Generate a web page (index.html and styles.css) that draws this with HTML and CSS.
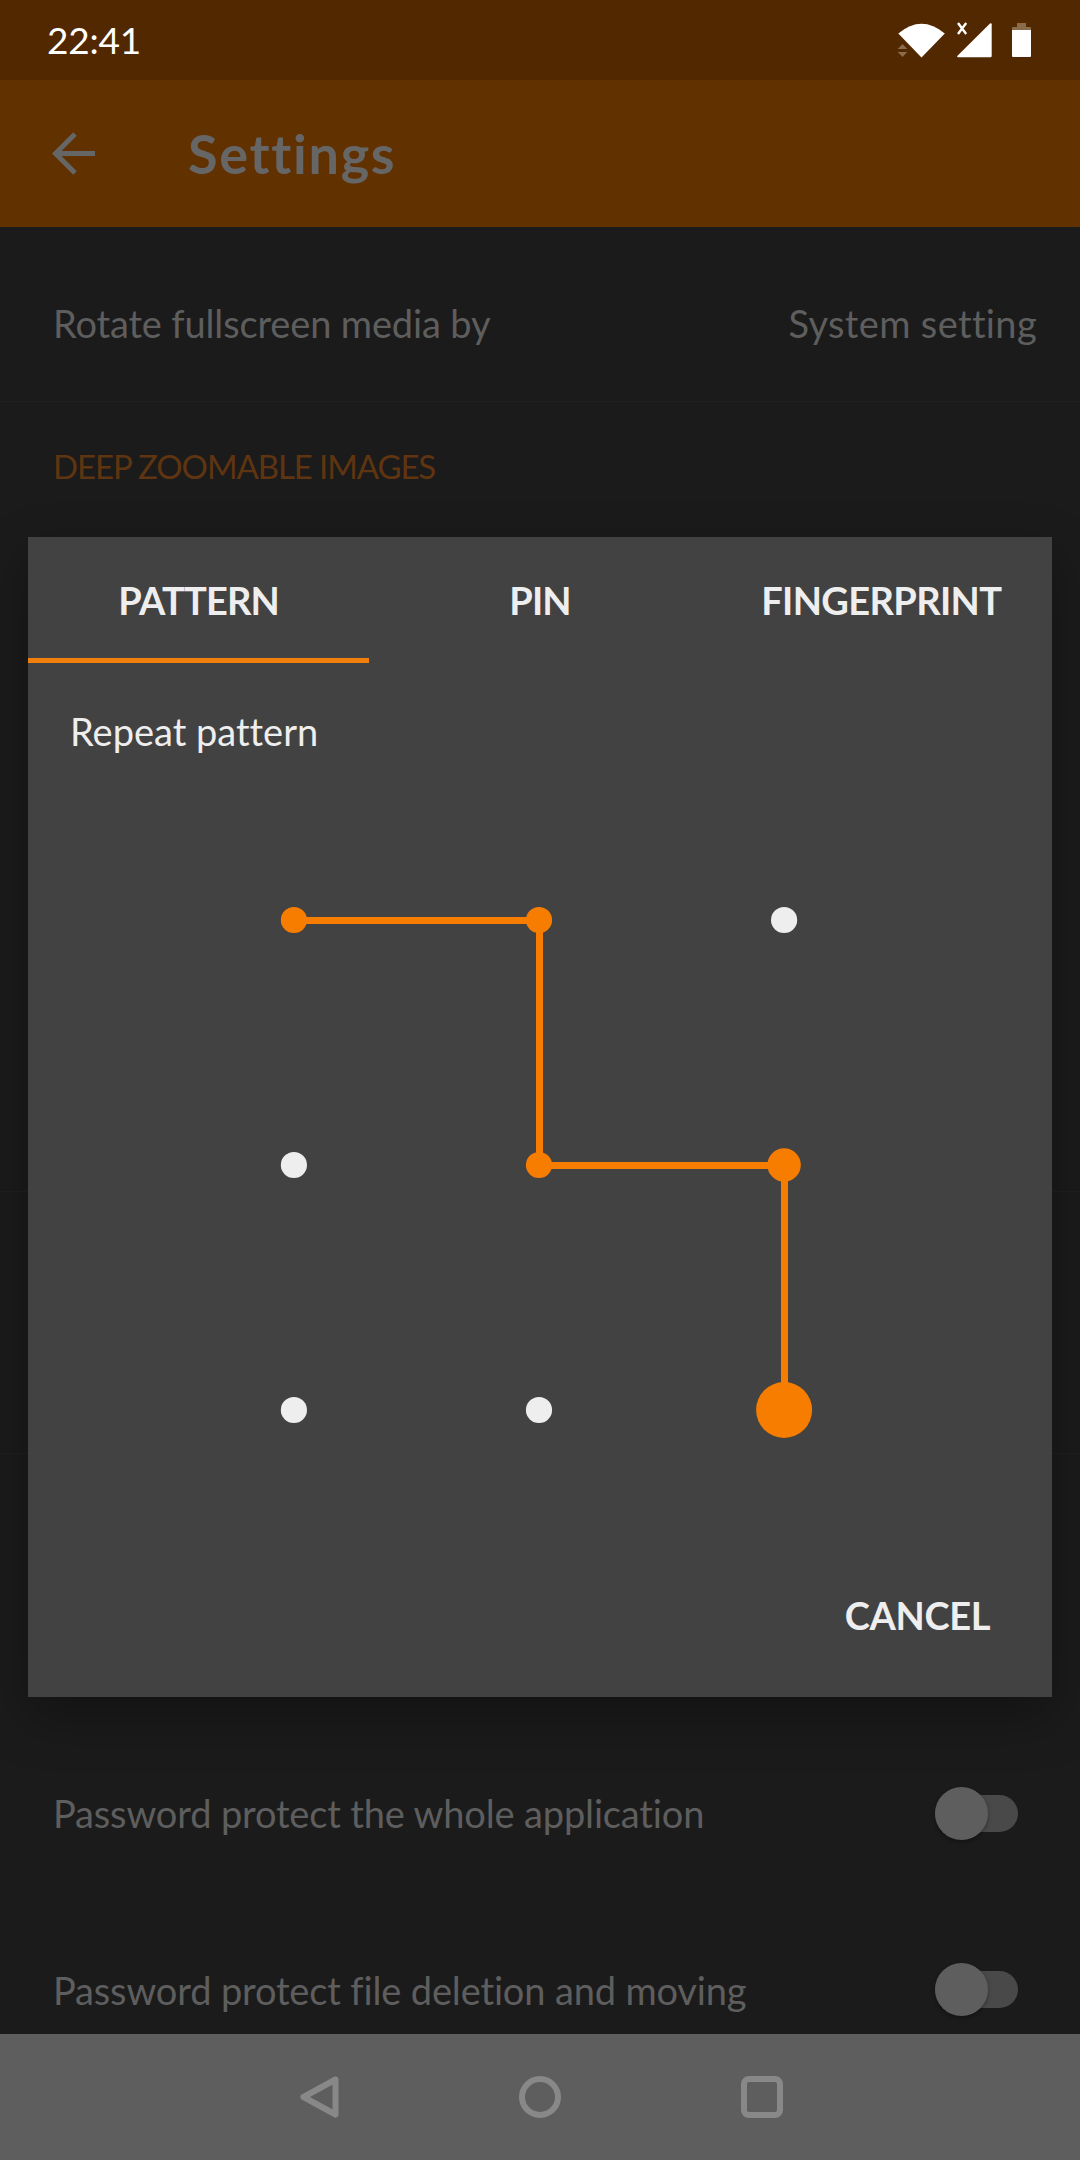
FILE: index.html
```html
<!DOCTYPE html>
<html lang="en">
<head>
<meta charset="utf-8">
<title>Settings</title>
<link rel="stylesheet" href="styles.css">
</head>
<body>
<div class="screen">
  <div class="status-bar">
    <span class="clock">22:41</span>
    <svg class="status-icons" width="140" height="40" viewBox="895 20 140 40">
      <path d="M898.3 33.5Q921.5 14 944.8 33.5L921.5 57.5Z" fill="#fff"/>
      <path d="M902.5 44l4.800 5h-9.600zM902.500 57l4.800-5h-9.600z" fill="#8a6b4c"/>
      <path d="M958 57.300q-1.800-.3-.5-1.600L990 23.400q1.700-.8 1.700 1V56q0 1.300-1.300 1.300z" fill="#fff"/>
      <path d="M958 23l8.200 11M966.200 23L958 34" stroke="#fff" stroke-width="2.400"/>
      <path d="M1012 30v-2q0-1 1-1h4v-4h9v4h4q1 0 1 1v2z" fill="#8a6b4c"/>
      <path d="M1012 30h19v26q0 1-1 1h-17q-1 0-1-1z" fill="#fff"/>
    </svg>
  </div>
  <header class="app-bar">
    <svg class="back" width="44" height="44" viewBox="0 0 44 44"><path d="M23 2L3.500 21.500 23 41M4 21.500h39" fill="none" stroke="#666" stroke-width="5"/></svg>
    <h1 class="title">Settings</h1>
  </header>
  <main class="settings">
    <div class="row row-first"><span class="label">Rotate fullscreen media by</span><span class="value">System setting</span></div>
    <div class="section">DEEP ZOOMABLE IMAGES</div>
    <div class="group group-a"></div>
    <div class="group group-b"></div>
    <div class="group group-c"></div>
    <div class="row"><span class="label">Password protect the whole application</span><span class="switch"><span class="thumb"></span></span></div>
    <div class="row row-last"><span class="label">Password protect file deletion and moving</span><span class="switch"><span class="thumb"></span></span></div>
  </main>
  <nav class="nav-bar">
    <svg width="44" height="44" viewBox="0 0 44 44"><path d="M39.500 4.500L7.500 22 39.500 39.500Z"/></svg>
    <svg width="44" height="44" viewBox="0 0 44 44"><circle cx="22" cy="22" r="18"/></svg>
    <svg width="44" height="44" viewBox="0 0 44 44"><rect x="4" y="4" width="36" height="36" rx="5"/></svg>
  </nav>
  <section class="dialog">
    <div class="tabs">
      <div class="tab active">PATTERN</div>
      <div class="tab">PIN</div>
      <div class="tab tab-finger">FINGERPRINT</div>
    </div>
    <p class="prompt">Repeat pattern</p>
    <svg class="lock" width="1024" height="740" viewBox="28 800 1024 740">
      <path d="M294 920.500H539.500V1165.500H784.500V1410" fill="none" stroke="#f77d00" stroke-width="7"/>
      <g fill="#f77d00">
        <circle cx="293.900" cy="920" r="13.100"/><circle cx="539" cy="920" r="13.100"/>
        <circle cx="539" cy="1165" r="13.100"/><circle cx="784.100" cy="1165" r="16.700"/>
        <circle cx="784.100" cy="1410" r="28"/>
      </g>
      <g fill="#eee">
        <circle cx="784.100" cy="920" r="13.100"/><circle cx="293.900" cy="1165" r="13.100"/>
        <circle cx="293.900" cy="1410" r="13.100"/><circle cx="539" cy="1410" r="13.100"/>
      </g>
    </svg>
    <div class="actions">CANCEL</div>
  </section>
</div>
</body>
</html>
```
FILE: styles.css
```css
* { box-sizing: border-box; }
body { margin: 0; background: #1b1b1b; font-family: Lato, "Noto Sans", sans-serif; font-size: 38px; line-height: 56px; white-space: nowrap; font-variant-ligatures: none; }
.screen { position: relative; width: 1080px; height: 2160px; overflow: hidden; display: flex; flex-direction: column; }
.status-bar { height: 80px; background: #522800; display: flex; align-items: center; justify-content: space-between; padding: 0 45px 0 47px; color: #fff; }
.clock { font-size: 37px; letter-spacing: -.2px; }
.app-bar { height: 147px; background: #613100; display: flex; align-items: center; padding-left: 52px; color: #666; }
.title { margin: 0 0 0 92px; font-size: 54px; font-weight: 700; line-height: 80px; letter-spacing: 1.7px; }
.settings { flex: 1; min-height: 0; display: flex; flex-direction: column; color: #5e5e5e; }
.label { letter-spacing: -.15px; }
.value { letter-spacing: .35px; }
.row { flex: none; height: 176px; display: flex; align-items: center; justify-content: space-between; padding: 0 62px 0 53px; }
.row-first { height: 175px; align-items: flex-start; padding: 68px 43px 0 53px; border-bottom: 1px solid #202020; }
.row-last { height: 133px; padding-top: 44px; }
.section { flex: none; height: 135px; padding: 36px 0 0 53px; color: #5f3410; font-size: 33px; letter-spacing: -1.1px; }
.group { flex: none; border-bottom: 1px solid #202020; }
.group-a { height: 655px; }
.group-b { height: 262px; }
.group-c { height: 271px; border: 0; }
.switch { width: 83px; height: 37px; border-radius: 19px; background: #494949; display: flex; align-items: center; }
.thumb { flex: none; width: 53px; height: 53px; border-radius: 50%; background: #5e5e5e; box-shadow: 0 2px 4px rgba(0,0,0,.3); }
.nav-bar { height: 126px; background: #5e5e5e; display: flex; align-items: center; justify-content: center; gap: 178px; }
.nav-bar svg { fill: none; stroke: #888; stroke-width: 6; stroke-linejoin: round; }
.dialog { position: absolute; left: 28px; top: 537px; width: 1024px; height: 1160px; background: #424242; color: #eee; box-shadow: 0 20px 50px rgba(0,0,0,.3); display: flex; flex-direction: column; }
.tabs { display: flex; height: 126px; font-weight: 700; }
.tab { flex: 1; text-align: center; padding-top: 35px; letter-spacing: -.8px; }
.tab.active { border-bottom: 5px solid #f07f0c; }
.tab-finger { letter-spacing: -.65px; }
.prompt { margin: 0; height: 137px; padding: 40px 0 0 42px; }
.lock { display: block; flex: none; }
.actions { padding: 47px 62px 0; text-align: right; font-weight: 700; letter-spacing: -.4px; }
```
